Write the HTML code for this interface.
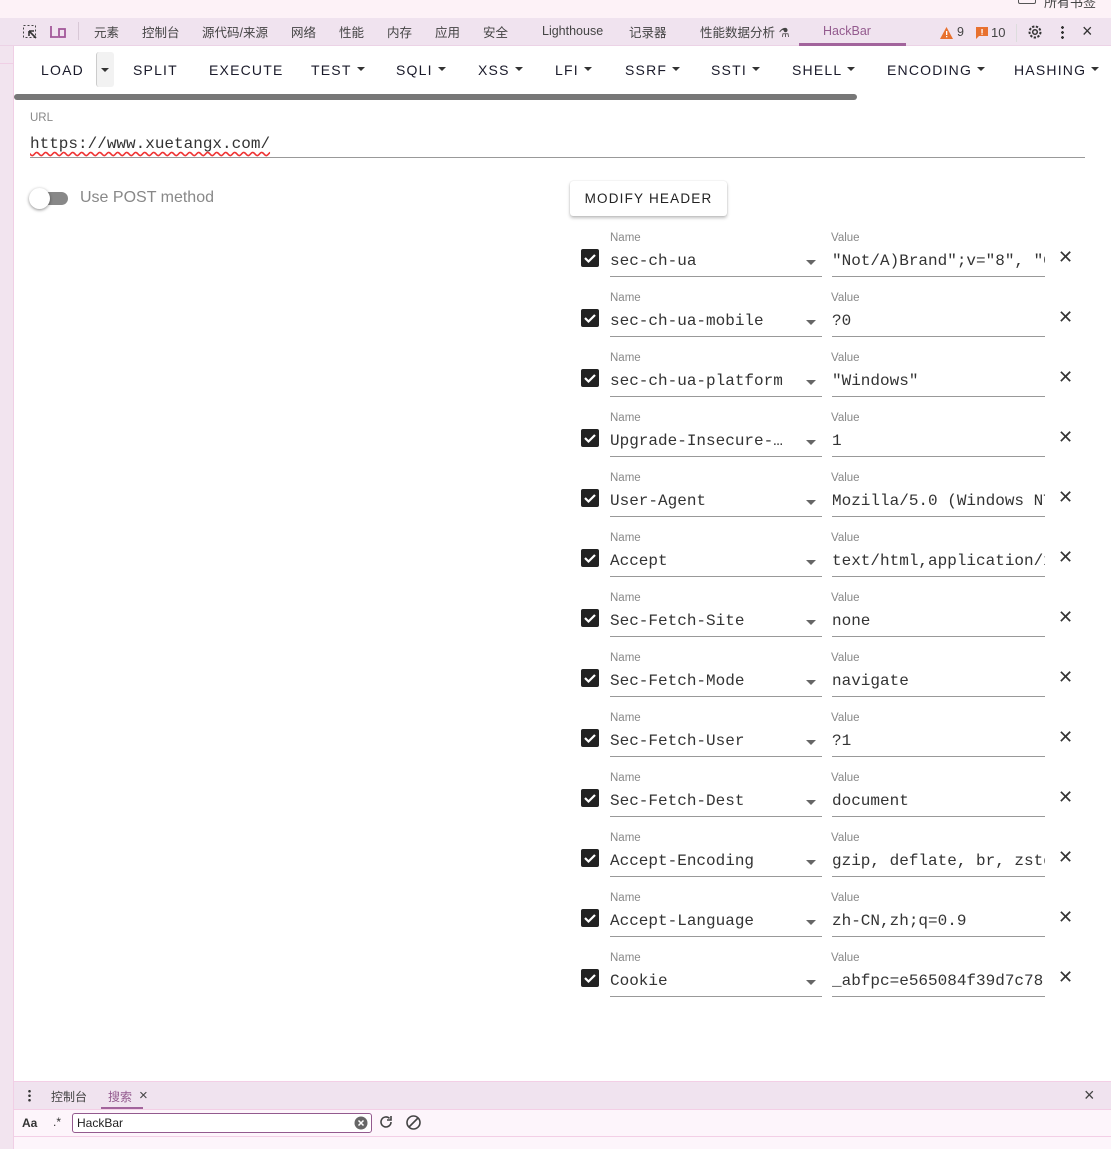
<!DOCTYPE html>
<html><head><meta charset="utf-8">
<style>
*{margin:0;padding:0;box-sizing:border-box}
body{width:1111px;height:1149px;position:relative;overflow:hidden;background:#fff;font-family:"Liberation Sans","Noto Sans CJK SC",sans-serif;color:#202124}
.a{position:absolute}
.cjk{font-family:"Liberation Sans","Noto Sans CJK SC",sans-serif}
.tab{position:absolute;top:22px;font-size:12.5px;color:#444}
.btn{position:absolute;top:62px;font-size:14px;letter-spacing:1.2px;color:#1a1a2a;font-weight:500}
.car{display:inline-block;width:0;height:0;border-left:4px solid transparent;border-right:4px solid transparent;border-top:4px solid #333;vertical-align:middle;margin-left:5px;position:relative;top:-2px}
.lbl{position:absolute;font-size:11.5px;color:#888}
.mono{font-family:"Liberation Mono",monospace;font-size:16px;color:#333}
.fld{position:absolute;border-bottom:1px solid #999;height:27px;padding-top:2px;white-space:nowrap;overflow:hidden}
.cb{position:absolute;width:18px;height:18px;background:#222;border-radius:2px}
.x{position:absolute;font-size:18px;color:#333}
.dd{position:absolute;width:0;height:0;border-left:5px solid transparent;border-right:5px solid transparent;border-top:5px solid #666}
</style></head><body>
<div class="a" style="left:0;top:0;width:1111px;height:18px;background:#fdf2f7"></div>
<div class="a" style="left:1018px;top:-6px;width:18px;height:10px;border:1.5px solid #555;border-radius:2px"></div>
<div class="a cjk" style="left:1044px;top:-8px;font-size:13px;color:#444">所有书签</div>
<div class="a" style="left:0;top:18px;width:1111px;height:28px;background:#f0e3ef;border-bottom:1px solid #ecd3e6"></div>
<div class="a" style="left:0;top:46px;width:14px;height:1103px;background:#f2e4ef;border-right:1px solid #f0cfe5"></div>
<div class="a" style="left:0;top:46px;width:14px;height:18px;border-bottom:1px solid #f0cfe5;border-right:1px solid #f0cfe5"></div>
<svg class="a" style="left:22px;top:24px" width="16" height="16"><rect x="1.5" y="1.5" width="12" height="12" fill="none" stroke="#444" stroke-dasharray="2 2"/><path d="M7 7l7 7M7 7h5M7 7v5" stroke="#333" stroke-width="1.6" fill="none"/></svg>
<svg class="a" style="left:49px;top:24px" width="18" height="16"><path d="M2 2v11h7M2 13H1" stroke="#a2589a" stroke-width="1.8" fill="none"/><rect x="10" y="5" width="6" height="8" fill="none" stroke="#a2589a" stroke-width="1.8"/></svg>
<div class="a" style="left:78px;top:22px;width:1px;height:18px;background:#d8c8d6"></div>
<div class="tab" style="left:94px">元素</div>
<div class="tab" style="left:142px">控制台</div>
<div class="tab" style="left:202px">源代码/来源</div>
<div class="tab" style="left:291px">网络</div>
<div class="tab" style="left:339px">性能</div>
<div class="tab" style="left:387px">内存</div>
<div class="tab" style="left:435px">应用</div>
<div class="tab" style="left:483px">安全</div>
<div class="tab" style="left:542px;top:24px">Lighthouse</div>
<div class="tab" style="left:629px">记录器</div>
<div class="tab" style="left:700px">性能数据分析 ⚗</div>
<div class="tab" style="left:823px;top:24px;color:#935a8e">HackBar</div>
<div class="a" style="left:799px;top:43px;width:107px;height:3px;background:#a2649c"></div>
<svg class="a" style="left:940px;top:27px" width="13" height="12"><path d="M6.5 0L13 12H0z" fill="#e8712f"/><rect x="6" y="4" width="1.3" height="4" fill="#fff"/><rect x="6" y="9" width="1.3" height="1.3" fill="#fff"/></svg>
<div class="tab" style="left:957px;top:25px">9</div>
<svg class="a" style="left:976px;top:27px" width="12" height="13"><path d="M0 0h12v9H3l-3 3z" fill="#e8712f"/><rect x="5.4" y="2" width="1.3" height="4" fill="#fff"/><rect x="5.4" y="6.5" width="1.3" height="1.3" fill="#fff"/></svg>
<div class="tab" style="left:991px;top:25px;font-size:13px">10</div>
<div class="a" style="left:1016px;top:24px;width:1px;height:18px;background:#ddd"></div>
<svg class="a" style="left:1027px;top:24px" width="16" height="16"><circle cx="8" cy="8" r="5.5" fill="none" stroke="#333" stroke-width="2" stroke-dasharray="2.3 1.5"/><circle cx="8" cy="8" r="2.3" fill="none" stroke="#333" stroke-width="1.5"/></svg>
<div class="a" style="left:1061px;top:25px;width:3px;height:14px;background:radial-gradient(circle,#333 1.3px,transparent 1.5px) 0 0/3px 5px"></div>
<div class="a" style="left:1082px;top:21px;font-size:18px;color:#333">×</div>
<div class="btn" style="left:41px">LOAD</div>
<div class="a" style="left:96px;top:52px;width:18px;height:35px;background:#f2f2f2;border-radius:3px;border-left:1px solid #ccc"></div>
<div class="a" style="left:101px;top:68px;width:0;height:0;border-left:4px solid transparent;border-right:4px solid transparent;border-top:4px solid #333"></div>
<div class="btn" style="left:133px">SPLIT</div>
<div class="btn" style="left:209px">EXECUTE</div>
<div class="btn" style="left:311px">TEST<span class="car"></span></div>
<div class="btn" style="left:396px">SQLI<span class="car"></span></div>
<div class="btn" style="left:478px">XSS<span class="car"></span></div>
<div class="btn" style="left:555px">LFI<span class="car"></span></div>
<div class="btn" style="left:625px">SSRF<span class="car"></span></div>
<div class="btn" style="left:711px">SSTI<span class="car"></span></div>
<div class="btn" style="left:792px">SHELL<span class="car"></span></div>
<div class="btn" style="left:887px">ENCODING<span class="car"></span></div>
<div class="btn" style="left:1014px">HASHING<span class="car"></span></div>
<div class="a" style="left:14px;top:94px;width:843px;height:6px;background:#777;border-radius:3px"></div>
<div class="lbl" style="left:30px;top:112px">URL</div>
<div class="a mono" style="left:30px;top:135px;text-decoration:underline wavy #e33;text-decoration-skip-ink:none;text-underline-offset:3px">https://www.xuetangx.com/</div>
<div class="a" style="left:30px;top:157px;width:1055px;height:1px;background:#999"></div>
<div class="a" style="left:34px;top:192px;width:34px;height:13px;border-radius:7px;background:#888"></div>
<div class="a" style="left:29px;top:188px;width:21px;height:21px;border-radius:50%;background:#fff;box-shadow:0 1px 3px rgba(0,0,0,.45)"></div>
<div class="a" style="left:80px;top:189px;font-size:16px;color:#888">Use POST method</div>
<div class="a" style="left:570px;top:181px;width:157px;height:35px;background:#fff;border-radius:3px;box-shadow:0 2px 3px rgba(0,0,0,.25),0 0 1px rgba(0,0,0,.2);font-size:13.5px;letter-spacing:1.2px;font-weight:500;text-align:center;line-height:36px;color:#222">MODIFY HEADER</div>

<div style="position:absolute;left:0;top:232px">
<div class="lbl" style="left:610px;top:0">Name</div><div class="lbl" style="left:831px;top:0">Value</div>
<div class="cb" style="left:581px;top:17px"></div>
<svg class="a" style="left:581px;top:17px" width="18" height="18"><path d="M4 9l3.5 3.5L14 6" stroke="#fff" stroke-width="2.2" fill="none"/></svg>
<div class="fld mono" style="left:610px;top:18px;width:212px">sec-ch-ua</div><div class="dd" style="left:806px;top:28px"></div>
<div class="fld mono" style="left:832px;top:18px;width:213px">"Not/A)Brand";v="8", "Chromium"</div>
<div class="x" style="left:1058px;top:15px">✕</div>
</div>
<div style="position:absolute;left:0;top:292px">
<div class="lbl" style="left:610px;top:0">Name</div><div class="lbl" style="left:831px;top:0">Value</div>
<div class="cb" style="left:581px;top:17px"></div>
<svg class="a" style="left:581px;top:17px" width="18" height="18"><path d="M4 9l3.5 3.5L14 6" stroke="#fff" stroke-width="2.2" fill="none"/></svg>
<div class="fld mono" style="left:610px;top:18px;width:212px">sec-ch-ua-mobile</div><div class="dd" style="left:806px;top:28px"></div>
<div class="fld mono" style="left:832px;top:18px;width:213px">?0</div>
<div class="x" style="left:1058px;top:15px">✕</div>
</div>
<div style="position:absolute;left:0;top:352px">
<div class="lbl" style="left:610px;top:0">Name</div><div class="lbl" style="left:831px;top:0">Value</div>
<div class="cb" style="left:581px;top:17px"></div>
<svg class="a" style="left:581px;top:17px" width="18" height="18"><path d="M4 9l3.5 3.5L14 6" stroke="#fff" stroke-width="2.2" fill="none"/></svg>
<div class="fld mono" style="left:610px;top:18px;width:212px">sec-ch-ua-platform</div><div class="dd" style="left:806px;top:28px"></div>
<div class="fld mono" style="left:832px;top:18px;width:213px">"Windows"</div>
<div class="x" style="left:1058px;top:15px">✕</div>
</div>
<div style="position:absolute;left:0;top:412px">
<div class="lbl" style="left:610px;top:0">Name</div><div class="lbl" style="left:831px;top:0">Value</div>
<div class="cb" style="left:581px;top:17px"></div>
<svg class="a" style="left:581px;top:17px" width="18" height="18"><path d="M4 9l3.5 3.5L14 6" stroke="#fff" stroke-width="2.2" fill="none"/></svg>
<div class="fld mono" style="left:610px;top:18px;width:212px">Upgrade-Insecure-…</div><div class="dd" style="left:806px;top:28px"></div>
<div class="fld mono" style="left:832px;top:18px;width:213px">1</div>
<div class="x" style="left:1058px;top:15px">✕</div>
</div>
<div style="position:absolute;left:0;top:472px">
<div class="lbl" style="left:610px;top:0">Name</div><div class="lbl" style="left:831px;top:0">Value</div>
<div class="cb" style="left:581px;top:17px"></div>
<svg class="a" style="left:581px;top:17px" width="18" height="18"><path d="M4 9l3.5 3.5L14 6" stroke="#fff" stroke-width="2.2" fill="none"/></svg>
<div class="fld mono" style="left:610px;top:18px;width:212px">User-Agent</div><div class="dd" style="left:806px;top:28px"></div>
<div class="fld mono" style="left:832px;top:18px;width:213px">Mozilla/5.0 (Windows NT</div>
<div class="x" style="left:1058px;top:15px">✕</div>
</div>
<div style="position:absolute;left:0;top:532px">
<div class="lbl" style="left:610px;top:0">Name</div><div class="lbl" style="left:831px;top:0">Value</div>
<div class="cb" style="left:581px;top:17px"></div>
<svg class="a" style="left:581px;top:17px" width="18" height="18"><path d="M4 9l3.5 3.5L14 6" stroke="#fff" stroke-width="2.2" fill="none"/></svg>
<div class="fld mono" style="left:610px;top:18px;width:212px">Accept</div><div class="dd" style="left:806px;top:28px"></div>
<div class="fld mono" style="left:832px;top:18px;width:213px">text/html,application/xhtml</div>
<div class="x" style="left:1058px;top:15px">✕</div>
</div>
<div style="position:absolute;left:0;top:592px">
<div class="lbl" style="left:610px;top:0">Name</div><div class="lbl" style="left:831px;top:0">Value</div>
<div class="cb" style="left:581px;top:17px"></div>
<svg class="a" style="left:581px;top:17px" width="18" height="18"><path d="M4 9l3.5 3.5L14 6" stroke="#fff" stroke-width="2.2" fill="none"/></svg>
<div class="fld mono" style="left:610px;top:18px;width:212px">Sec-Fetch-Site</div><div class="dd" style="left:806px;top:28px"></div>
<div class="fld mono" style="left:832px;top:18px;width:213px">none</div>
<div class="x" style="left:1058px;top:15px">✕</div>
</div>
<div style="position:absolute;left:0;top:652px">
<div class="lbl" style="left:610px;top:0">Name</div><div class="lbl" style="left:831px;top:0">Value</div>
<div class="cb" style="left:581px;top:17px"></div>
<svg class="a" style="left:581px;top:17px" width="18" height="18"><path d="M4 9l3.5 3.5L14 6" stroke="#fff" stroke-width="2.2" fill="none"/></svg>
<div class="fld mono" style="left:610px;top:18px;width:212px">Sec-Fetch-Mode</div><div class="dd" style="left:806px;top:28px"></div>
<div class="fld mono" style="left:832px;top:18px;width:213px">navigate</div>
<div class="x" style="left:1058px;top:15px">✕</div>
</div>
<div style="position:absolute;left:0;top:712px">
<div class="lbl" style="left:610px;top:0">Name</div><div class="lbl" style="left:831px;top:0">Value</div>
<div class="cb" style="left:581px;top:17px"></div>
<svg class="a" style="left:581px;top:17px" width="18" height="18"><path d="M4 9l3.5 3.5L14 6" stroke="#fff" stroke-width="2.2" fill="none"/></svg>
<div class="fld mono" style="left:610px;top:18px;width:212px">Sec-Fetch-User</div><div class="dd" style="left:806px;top:28px"></div>
<div class="fld mono" style="left:832px;top:18px;width:213px">?1</div>
<div class="x" style="left:1058px;top:15px">✕</div>
</div>
<div style="position:absolute;left:0;top:772px">
<div class="lbl" style="left:610px;top:0">Name</div><div class="lbl" style="left:831px;top:0">Value</div>
<div class="cb" style="left:581px;top:17px"></div>
<svg class="a" style="left:581px;top:17px" width="18" height="18"><path d="M4 9l3.5 3.5L14 6" stroke="#fff" stroke-width="2.2" fill="none"/></svg>
<div class="fld mono" style="left:610px;top:18px;width:212px">Sec-Fetch-Dest</div><div class="dd" style="left:806px;top:28px"></div>
<div class="fld mono" style="left:832px;top:18px;width:213px">document</div>
<div class="x" style="left:1058px;top:15px">✕</div>
</div>
<div style="position:absolute;left:0;top:832px">
<div class="lbl" style="left:610px;top:0">Name</div><div class="lbl" style="left:831px;top:0">Value</div>
<div class="cb" style="left:581px;top:17px"></div>
<svg class="a" style="left:581px;top:17px" width="18" height="18"><path d="M4 9l3.5 3.5L14 6" stroke="#fff" stroke-width="2.2" fill="none"/></svg>
<div class="fld mono" style="left:610px;top:18px;width:212px">Accept-Encoding</div><div class="dd" style="left:806px;top:28px"></div>
<div class="fld mono" style="left:832px;top:18px;width:213px">gzip, deflate, br, zstd</div>
<div class="x" style="left:1058px;top:15px">✕</div>
</div>
<div style="position:absolute;left:0;top:892px">
<div class="lbl" style="left:610px;top:0">Name</div><div class="lbl" style="left:831px;top:0">Value</div>
<div class="cb" style="left:581px;top:17px"></div>
<svg class="a" style="left:581px;top:17px" width="18" height="18"><path d="M4 9l3.5 3.5L14 6" stroke="#fff" stroke-width="2.2" fill="none"/></svg>
<div class="fld mono" style="left:610px;top:18px;width:212px">Accept-Language</div><div class="dd" style="left:806px;top:28px"></div>
<div class="fld mono" style="left:832px;top:18px;width:213px">zh-CN,zh;q=0.9</div>
<div class="x" style="left:1058px;top:15px">✕</div>
</div>
<div style="position:absolute;left:0;top:952px">
<div class="lbl" style="left:610px;top:0">Name</div><div class="lbl" style="left:831px;top:0">Value</div>
<div class="cb" style="left:581px;top:17px"></div>
<svg class="a" style="left:581px;top:17px" width="18" height="18"><path d="M4 9l3.5 3.5L14 6" stroke="#fff" stroke-width="2.2" fill="none"/></svg>
<div class="fld mono" style="left:610px;top:18px;width:212px">Cookie</div><div class="dd" style="left:806px;top:28px"></div>
<div class="fld mono" style="left:832px;top:18px;width:213px">_abfpc=e565084f39d7c78</div>
<div class="x" style="left:1058px;top:15px">✕</div>
</div>

<div class="a" style="left:14px;top:1081px;width:1097px;height:29px;background:#f0e3ef;border-top:1px solid #f3cfe6;border-bottom:1px solid #f3cfe6"></div>
<div class="a" style="left:28px;top:1089px;width:3px;height:13px;background:radial-gradient(circle,#333 1.2px,transparent 1.4px) 0 0/3px 4.5px"></div>
<div class="a cjk" style="left:51px;top:1088px;font-size:12px;color:#444">控制台</div>
<div class="a cjk" style="left:108px;top:1088px;font-size:12px;color:#935a8e">搜索</div>
<div class="a" style="left:139px;top:1087px;font-size:15px;color:#444">×</div>
<div class="a" style="left:101px;top:1107px;width:42px;height:2px;background:#a2649c"></div>
<div class="a" style="left:1084px;top:1085px;font-size:18px;color:#444">×</div>
<div class="a" style="left:14px;top:1110px;width:1097px;height:27px;background:#fdf5fb;border-bottom:1px solid #f3cfe6"></div>
<div class="a" style="left:22px;top:1116px;font-size:12px;font-weight:bold;color:#333">Aa</div>
<div class="a" style="left:53px;top:1115px;font-size:12px;color:#333">.*</div>
<div class="a" style="left:72px;top:1113px;width:300px;height:20px;border:1px solid #935a8e;border-radius:3px;background:#fff;font-size:12px;line-height:18px;padding-left:4px;color:#222">HackBar</div>
<svg class="a" style="left:354px;top:1116px" width="14" height="14"><circle cx="7" cy="7" r="6.5" fill="#666"/><path d="M4.5 4.5l5 5M9.5 4.5l-5 5" stroke="#fff" stroke-width="1.5"/></svg>
<svg class="a" style="left:378px;top:1114px" width="16" height="16"><path d="M13 8a5 5 0 1 1-1.5-3.6" stroke="#444" stroke-width="1.6" fill="none"/><path d="M13 2v4h-4" stroke="#444" stroke-width="1.6" fill="none"/></svg>
<svg class="a" style="left:405px;top:1114px" width="17" height="17"><circle cx="8.5" cy="8.5" r="6.5" stroke="#444" stroke-width="1.6" fill="none"/><path d="M4 13L13 4" stroke="#444" stroke-width="1.6"/></svg>
<div class="a" style="left:14px;top:1137px;width:1097px;height:12px;background:#fdf5fb"></div>
</body></html>
